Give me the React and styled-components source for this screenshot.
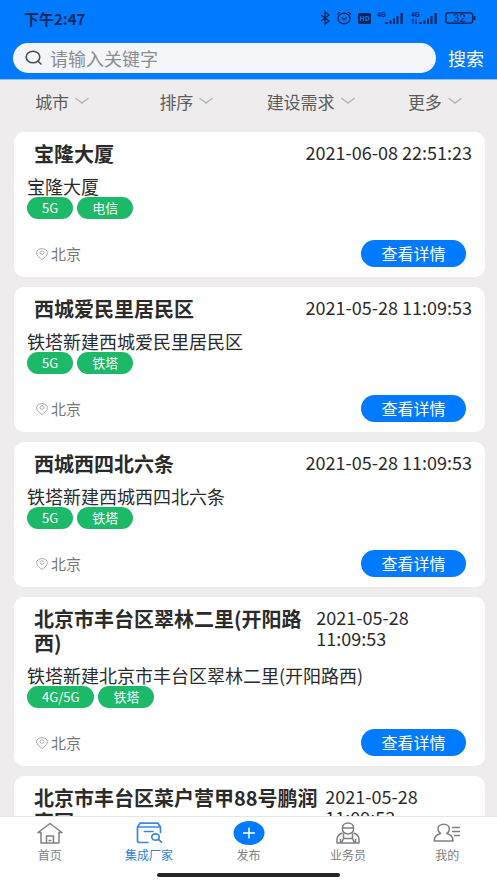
import React, { useState } from 'react';
import styled, { createGlobalStyle } from 'styled-components';

const GlobalStyle = createGlobalStyle`
    * {
        box-sizing: border-box;
    }

    body {
        margin: 0;
        background: #eeecec;
        color: #2b2b2b;
        font-family: "Noto Sans CJK SC", "Noto Sans", sans-serif;
    }

    button, input {
        font-family: inherit;
    }

    button {
        padding: 0;
        border: none;
        background: none;
        cursor: pointer;
    }
`;

const Page = styled.div`
    display: flex;
    flex-direction: column;
    height: 100vh;
`;

const Header = styled.header`
    flex: none;
    background: #007aff;
    border-bottom: 1px solid #8fc4fb;
`;

const StatusBar = styled.div`
    display: flex;
    align-items: center;
    justify-content: space-between;
    height: 36px;
    padding: 0 21px 0 24px;
    color: #06285c;
`;

const Clock = styled.span`
    font-size: 15px;
    font-weight: 700;
`;

const StatusIcons = styled.div`
    display: flex;
    align-items: center;
    gap: 6px;

    svg {
        display: block;
        overflow: visible;
    }

    text {
        font-family: Roboto, "Liberation Sans", sans-serif;
    }
`;

const SearchForm = styled.form`
    display: flex;
    align-items: center;
    gap: 12px;
    padding: 7px 13px 6px;
`;

const SearchBox = styled.label`
    display: flex;
    align-items: center;
    flex: 1;
    gap: 7px;
    height: 30px;
    padding: 0 12px;
    border-radius: 15px;
    background: #f3f5f9;
`;

const SearchInput = styled.input`
    flex: 1;
    min-width: 0;
    padding: 0;
    border: none;
    outline: none;
    background: none;
    color: #333;
    font-size: 18px;
    line-height: 28px;

    &::placeholder {
        color: #8c8e92;
        opacity: 1;
    }
`;

const SearchButton = styled.button`
    color: #fff;
    font-size: 18px;
    line-height: 28px;
`;

const Filters = styled.nav`
    display: flex;
    flex: none;
    height: 42px;
`;

const FilterButton = styled.button`
    display: flex;
    align-items: center;
    justify-content: center;
    flex: 1;
    gap: 6px;
    color: #5c5c5c;
    font-size: 17px;
`;

const List = styled.main`
    display: flex;
    flex-direction: column;
    flex: 1;
    gap: 10px;
    min-height: 0;
    padding: 10px 12px 10px 14px;
    overflow-y: auto;
    scrollbar-width: none;
`;

const Card = styled.article`
    flex: none;
    padding: 10px 13px;
    border-radius: 10px;
    background: #fff;
`;

const CardHeader = styled.div`
    display: flex;
    justify-content: space-between;
    gap: 6px;
    padding-left: 7px;
`;

const Title = styled.h2`
    margin: 0;
    font-size: 20px;
    line-height: 24px;
`;

const Time = styled.time`
    font-size: 18px;
    line-height: 21px;
`;

const Description = styled.p`
    margin: 9px 0 0;
    font-size: 18px;
    line-height: 22px;
`;

const Tags = styled.div`
    display: flex;
    gap: 4px;
`;

const Tag = styled.span`
    padding: 0 15px;
    border-radius: 11px;
    background: #1cba68;
    color: #fff;
    font-size: 13px;
    line-height: 22px;
`;

const CardFooter = styled.div`
    display: flex;
    align-items: center;
    justify-content: space-between;
    margin-top: 21px;
    padding: 0 6px 0 9px;
`;

const Location = styled.span`
    display: flex;
    align-items: center;
    gap: 3px;
    color: #777;
    font-size: 15px;
`;

const DetailButton = styled.button`
    width: 105px;
    border-radius: 14px;
    background: #007aff;
    color: #fff;
    font-size: 16px;
    line-height: 27px;
`;

const BottomBar = styled.footer`
    flex: none;
    border-top: 1px solid #e6e6e6;
    background: #fff;
`;

const Tabs = styled.nav`
    display: flex;
    padding-top: 4px;
`;

const TabLink = styled.a`
    display: flex;
    flex: 1;
    flex-direction: column;
    align-items: center;
    color: ${props => (props.$active ? '#2f7fd6' : '#808080')};
    font-size: 12px;
    line-height: 18px;
    text-decoration: none;

    svg {
        display: block;
    }
`;

const HomeIndicator = styled.div`
    width: 37%;
    height: 4px;
    margin: 9px auto 6px;
    border-radius: 2px;
    background: #262626;
`;

const BluetoothIcon = () => (
    <svg width="10" height="14" viewBox="0 0 10 14" fill="none" stroke="currentColor" strokeWidth="1.4">
        <path d="M1 4l8 6-4 3V1l4 3-8 6" />
    </svg>
);

const AlarmIcon = () => (
    <svg width="16" height="14" viewBox="0 0 16 14" fill="none" stroke="currentColor" strokeWidth="1.4">
        <ellipse cx="8" cy="7.5" rx="6" ry="5.3" />
        <path d="M1 3.2L4 1M15 3.2L12 1M5.5 6.5L8 8.5l2.8-2" />
    </svg>
);

const HdIcon = () => (
    <svg width="13" height="11" viewBox="0 0 13 11">
        <rect width="13" height="11" rx="1.5" fill="currentColor" />
        <path d="M2.5 3v5M5.5 3v5M2.5 5.5h3M7.8 3.5v4h1.2q1.700 0 1.700-2t-1.700-2z" fill="none" stroke="#0b70e4" strokeWidth="1.2" />
    </svg>
);

const SignalIcon = ({ data }) => (
    <svg width="28" height="16" viewBox="0 0 28 16" fill="currentColor">
        <text x="0" y="7" fontSize="7" fontWeight="700">4G</text>
        {data && <path d="M2 9v5M.8 10.500L2 9M5 9v5M5 14l1.200-1.500" fill="none" stroke="currentColor" />}
        <path d="M8 12h3v2H8zM12.500 10.500h2V14h-2zM16 8.500h2V14h-2zM19.500 6h2v8h-2zM23.500 3h2.300v11h-2.300z" />
    </svg>
);

const BatteryIcon = () => (
    <svg width="31" height="16" viewBox="0 0 31 16">
        <rect x="0.8" y="2.8" width="27" height="10.4" rx="3" fill="none" stroke="currentColor" strokeWidth="1.5" />
        <path d="M29.5 6v4" stroke="currentColor" strokeWidth="1.8" />
        <text x="14.5" y="12" textAnchor="middle" fontSize="11" fill="currentColor">32</text>
    </svg>
);

const SearchIcon = () => (
    <svg width="18" height="16" viewBox="0 0 18 16" fill="none" stroke="#4d4f52" strokeWidth="1.6" strokeLinecap="round">
        <ellipse cx="8" cy="7" rx="6.8" ry="5.8" />
        <path d="M12.8 11.2L16 14" />
    </svg>
);

const ChevronIcon = () => (
    <svg width="14" height="8" viewBox="0 0 14 8" fill="none" stroke="#b5b5b5" strokeWidth="1.5" strokeLinecap="round">
        <path d="M1 1.500l6 4.500 6-4.500" />
    </svg>
);

const PinIcon = () => (
    <svg width="12" height="12" viewBox="0 0 12 12" fill="none" stroke="#aaa">
        <path d="M6 11.500C3.500 9.500.6 7.500.6 4.800.6 2.300 3 .6 6 .6s5.400 1.700 5.400 4.200C11.400 7.500 8.500 9.500 6 11.500z" />
        <ellipse cx="6" cy="4.6" rx="2" ry="1.7" />
    </svg>
);

const HomeIcon = () => (
    <svg width="28" height="25" viewBox="0 0 28 25" fill="none" stroke="currentColor" strokeWidth="1.5" strokeLinejoin="round">
        <path d="M5 11.500H2L14 2.500l12 9H23V22H5zM10.500 22v-7h7v7M12.500 19.500h3" />
    </svg>
);

const FactoryIcon = () => (
    <svg width="28" height="25" viewBox="0 0 28 25" fill="none" stroke="#3b86e0" strokeWidth="1.7" strokeLinecap="round" strokeLinejoin="round">
        <path d="M13 21.500H4.500q-2 0-2-1.500V6L5 2.200h18L25.500 6v5.500M2.500 6h23M9.500 10.500H18" />
        <ellipse cx="20.5" cy="16" rx="3.7" ry="3.2" />
        <path d="M23.500 18.500l3 2.700" />
    </svg>
);

const PublishIcon = () => (
    <svg width="32" height="25" viewBox="0 0 32 25">
        <ellipse cx="16" cy="12" rx="15.5" ry="12" fill="#007aff" />
        <path d="M10 12h12M16 6.500v11" stroke="#fff" strokeWidth="1.5" />
    </svg>
);

const WorkerIcon = () => (
    <svg width="28" height="25" viewBox="0 0 28 25" fill="none" stroke="currentColor" strokeWidth="1.5" strokeLinejoin="round">
        <path d="M8 7h12M8.500 7c0-3 2.500-5 5.500-5s5.500 2 5.500 5v1.500c0 2.500-2.500 4.500-5.500 4.500s-5.500-2-5.500-4.500z" />
        <path d="M8.500 12C5 13 3 15 3 18.500V22h22v-3.500C25 15 23 13 19.500 12M6.500 22v-4M21.500 22v-4M9.500 12.500v5h9v-5M9.500 17.500L7.500 22M18.500 17.500l2 4.500" />
    </svg>
);

const ProfileIcon = () => (
    <svg width="28" height="25" viewBox="0 0 28 25" fill="none" stroke="currentColor" strokeWidth="1.6" strokeLinejoin="round">
        <path d="M7.500 12.500C5.500 11 5 9.500 5 8c0-2.800 2.500-4.800 5.700-4.800S16.400 5.200 16.400 8c0 1.500-.5 3-2.500 4.500 3.800 1 6.100 3.500 6.100 7.500H1.200c0-4 2.500-6.500 6.300-7.500zM19 6.500h8M19 10.500h8M21 14.500h6" />
    </svg>
);

const filters = ['城市', '排序', '建设需求', '更多'];

const projects = [
    {
        title: '宝隆大厦',
        time: '2021-06-08 22:51:23',
        description: '宝隆大厦',
        tags: ['5G', '电信'],
    },
    {
        title: '西城爱民里居民区',
        time: '2021-05-28 11:09:53',
        description: '铁塔新建西城爱民里居民区',
        tags: ['5G', '铁塔'],
    },
    {
        title: '西城西四北六条',
        time: '2021-05-28 11:09:53',
        description: '铁塔新建西城西四北六条',
        tags: ['5G', '铁塔'],
    },
    {
        title: '北京市丰台区翠林二里(开阳路西)',
        time: '2021-05-28 11:09:53',
        description: '铁塔新建北京市丰台区翠林二里(开阳路西)',
        tags: ['4G/5G', '铁塔'],
    },
    {
        title: '北京市丰台区菜户营甲88号鹏润家园',
        time: '2021-05-28 11:09:53',
        description: '铁塔新建北京市丰台区菜户营甲88号鹏润家园',
        tags: ['4G/5G', '铁塔'],
    },
];

const tabs = [
    { label: '首页', icon: HomeIcon },
    { label: '集成厂家', icon: FactoryIcon },
    { label: '发布', icon: PublishIcon },
    { label: '业务员', icon: WorkerIcon },
    { label: '我的', icon: ProfileIcon },
];

const ProjectCard = ({ project }) => (
    <Card>
        <CardHeader>
            <Title>{project.title}</Title>
            <Time>{project.time}</Time>
        </CardHeader>
        <Description>{project.description}</Description>
        <Tags>
            {project.tags.map(tag => (
                <Tag key={tag}>{tag}</Tag>
            ))}
        </Tags>
        <CardFooter>
            <Location>
                <PinIcon />
                北京
            </Location>
            <DetailButton type="button">查看详情</DetailButton>
        </CardFooter>
    </Card>
);

const App = () => {
    const [keyword, setKeyword] = useState('');
    const [activeTab, setActiveTab] = useState('集成厂家');

    return (
        <Page>
            <GlobalStyle />
            <Header>
                <StatusBar>
                    <Clock>下午2:47</Clock>
                    <StatusIcons>
                        <BluetoothIcon />
                        <AlarmIcon />
                        <HdIcon />
                        <SignalIcon />
                        <SignalIcon data />
                        <BatteryIcon />
                    </StatusIcons>
                </StatusBar>
                <SearchForm onSubmit={e => e.preventDefault()}>
                    <SearchBox htmlFor="keyword">
                        <SearchIcon />
                        <SearchInput
                            type="text"
                            id="keyword"
                            aria-label="请输入关键字"
                            placeholder="请输入关键字"
                            value={keyword}
                            onChange={e => setKeyword(e.target.value)}
                        />
                    </SearchBox>
                    <SearchButton type="submit">搜索</SearchButton>
                </SearchForm>
            </Header>
            <Filters>
                {filters.map(filter => (
                    <FilterButton type="button" key={filter}>
                        {filter}
                        <ChevronIcon />
                    </FilterButton>
                ))}
            </Filters>
            <List>
                {projects.map(project => (
                    <ProjectCard key={project.title} project={project} />
                ))}
            </List>
            <BottomBar>
                <Tabs>
                    {tabs.map(({ label, icon: Icon }) => (
                        <TabLink
                            href="#"
                            key={label}
                            $active={label === activeTab}
                            onClick={() => setActiveTab(label)}
                        >
                            <Icon />
                            {label}
                        </TabLink>
                    ))}
                </Tabs>
                <HomeIndicator />
            </BottomBar>
        </Page>
    );
};

export default App;
